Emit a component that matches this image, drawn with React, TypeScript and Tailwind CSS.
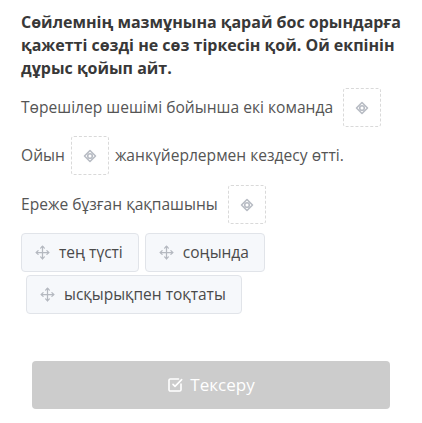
import { Move, SquareCheckBig } from 'lucide-react';

const options = ['тең түсті', 'соңында'];

function Blank() {
  return (
    <span className="inline-flex w-[38px] h-[39px] mx-[6px] border border-dashed border-[#d9d9d9] rounded-[3px] items-center justify-center align-middle">
      <svg width="14" height="14" viewBox="0 0 14 14" fill="none" stroke="#b8bcc4" strokeWidth="1.6">
        <path d="M7 1.5 L12.5 7 L7 12.5 L1.5 7 Z" strokeLinejoin="round" />
        <circle cx="7" cy="7" r="2.3" fill="#fff" />
      </svg>
    </span>
  );
}

function Chip({ label }: { label: string }) {
  return (
    <div className="flex items-center h-[39px] pl-[13px] pr-[15px] gap-[9px] bg-[#f6f8fb] border border-[#e1e4e9] rounded-[4px] text-[15.5px] text-[#4a4a4a]">
      <Move className="h-[15px] w-[15px] text-[#b5b9c0]" strokeWidth={2} />
      <span>{label}</span>
    </div>
  );
}

export default function App() {
  return (
    <div className="w-[422px] h-[423px] bg-white px-[21px] pt-[11px] font-['Open_Sans',sans-serif]">
      <h1 className="text-[16px] leading-[23px] font-bold text-[#383838]">
        Сөйлемнің мазмұнына қарай бос орындарға қажетті сөзді не сөз тіркесін қой. Ой екпінін дұрыс қойып айт.
      </h1>

      <div className="mt-[8px] text-[15.6px] text-[#555] space-y-[10px]">
        <div className="flex items-center h-[39px]">
          Төрешілер шешімі бойынша екі команда
          <span className="w-[4px]" />
          <Blank />
        </div>
        <div className="flex items-center h-[39px] -mt-[1px]">
          Ойын
          <Blank />
          жанкүйерлермен кездесу өтті.
        </div>
        <div className="flex items-center h-[39px]">
          Ереже бұзған қақпашыны
          <span className="w-[4px]" />
          <Blank />
        </div>
      </div>

      <div className="mt-[9px] flex gap-[6px]">
        {options.map((o) => (
          <Chip key={o} label={o} />
        ))}
      </div>
      <div className="mt-[3px] pl-[5px] flex">
        <Chip label="ысқырықпен тоқтаты" />
      </div>

      <div className="mt-[47px] px-[11px]">
        <button className="w-full h-[48px] bg-[#cccccc] rounded-[4px] flex items-center justify-center gap-[7px] text-white text-[17px]">
          <SquareCheckBig className="h-[16px] w-[16px]" strokeWidth={2.4} />
          Тексеру
        </button>
      </div>
    </div>
  );
}
